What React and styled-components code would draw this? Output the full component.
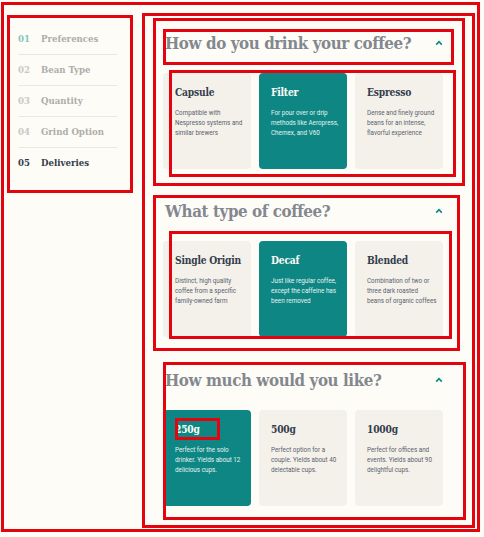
import React from "react";
import styled, { createGlobalStyle, css } from "styled-components";

const RED = "#e3040f";

const GlobalStyle = createGlobalStyle`
  html, body {
    margin: 0;
    padding: 0;
    background: #fefcf7;
  }
  * { box-sizing: border-box; }
`;

const steps = [
  { num: "01", label: "Preferences", state: "done" },
  { num: "02", label: "Bean Type" },
  { num: "03", label: "Quantity" },
  { num: "04", label: "Grind Option" },
  { num: "05", label: "Deliveries", state: "current" },
];

const sections = [
  {
    title: "How do you drink your coffee?",
    box: { ml: 0, w: 312, pl: 10, pt: 11, pb: 17 },
    titleMarked: true,
    rowFrame: "-3px -13px -8px 6px",
    cards: [
      { name: "Capsule", lines: ["Compatible with", "Nespresso systems and", "similar brewers"] },
      { name: "Filter", lines: ["For pour over or drip", "methods like Aeropress,", "Chemex, and V60"], active: true },
      { name: "Espresso", lines: ["Dense and finely ground", "beans for an intense,", "flavorful experience"] },
    ],
  },
  {
    title: "What type of coffee?",
    box: { ml: 0, w: 307, pl: 10, pt: 2, pb: 14 },
    rowFrame: "-10px -9px -2px 6px",
    cards: [
      { name: "Single Origin", lines: ["Distinct, high quality", "coffee from a specific", "family-owned farm"] },
      { name: "Decaf", lines: ["Just like regular coffee,", "except the caffeine has", "been removed"], active: true },
      { name: "Blended", lines: ["Combination of two or", "three dark roasted", "beans of organic coffees"] },
    ],
  },
  {
    title: "How much would you like?",
    box: { ml: 10, w: 303, pl: 0, pt: 4, pb: 14 },
    cards: [
      { name: "250g", lines: ["Perfect for the solo", "drinker. Yields about 12", "delicious cups."], active: true, marked: true },
      { name: "500g", lines: ["Perfect option for a", "couple. Yields about 40", "delectable cups."] },
      { name: "1000g", lines: ["Perfect for offices and", "events. Yields about 90", "delightful cups."] },
    ],
  },
];

export default function App() {
  return (
    <Page>
      <GlobalStyle />
      <Sidebar>
        {steps.map((s, i) => (
          <Step key={s.num} $last={i === steps.length - 1}>
            <StepNum $state={s.state}>{s.num}</StepNum>
            <StepLabel $state={s.state}>{s.label}</StepLabel>
          </Step>
        ))}
      </Sidebar>
      <Main>
        {sections.map((sec) => (
          <Section key={sec.title} $box={sec.box}>
            <TitleRow $marked={sec.titleMarked}>
              <Heading>{sec.title}</Heading>
              <Chevron width="8" height="6" viewBox="0 0 8 6">
                <polyline points="1.2,4.6 4,1.6 6.8,4.6" fill="none" stroke="#0e8784" strokeWidth="1.6" />
              </Chevron>
            </TitleRow>
            <Cards $frame={sec.rowFrame}>
              {sec.cards.map((c) => (
                <Card key={c.name} $active={c.active}>
                  <CardTitle $active={c.active} $marked={c.marked}>{c.name}</CardTitle>
                  <CardText $active={c.active}>
                    {c.lines.map((l, i) => (
                      <span key={i}>{l}</span>
                    ))}
                  </CardText>
                </Card>
              ))}
            </Cards>
          </Section>
        ))}
      </Main>
    </Page>
  );
}

const frame = (inset) => css`
  position: relative;
  &::after {
    content: "";
    position: absolute;
    inset: ${inset};
    border: 3px solid ${RED};
    pointer-events: none;
  }
`;

const Page = styled.div`
  width: 484px;
  height: 537px;
  display: flex;
  align-items: flex-start;
  background: #fefcf7;
  ${frame("2px 4px 5px 1px")}
`;

const Sidebar = styled.nav`
  margin: 15px 0 0 7px;
  width: 126px;
  height: 178px;
  padding: 9px 16px 0 11px;
  display: flex;
  flex-direction: column;
  outline: 3px solid ${RED};
  outline-offset: -3px;
`;

const Step = styled.div`
  height: 31px;
  padding-bottom: 1px;
  display: flex;
  align-items: center;
  gap: 10px;
  border-bottom: 1px solid ${(p) => (p.$last ? "transparent" : "#ebe8e1")};
  font-family: "DejaVu Serif", "Liberation Serif", serif;
  font-weight: 700;
  font-size: 8.6px;
`;

const StepNum = styled.span`
  width: 13px;
  color: ${(p) => (p.$state === "done" ? "#86c4c1" : p.$state === "current" ? "#333d4b" : "#c9c8c5")};
`;

const StepLabel = styled.span`
  color: ${(p) => (p.$state === "current" ? "#333d4b" : "#adadab")};
`;

const Main = styled.main`
  margin: 13px 0 0 9px;
  width: 333px;
  height: 515px;
  padding: 5px 0 0 11px;
  display: flex;
  flex-direction: column;
  gap: 9px;
  outline: 3px solid ${RED};
  outline-offset: -3px;
  & > *:last-child { margin-top: 2px; }
`;

const Section = styled.section`
  margin-left: ${(p) => p.$box.ml}px;
  width: ${(p) => p.$box.w}px;
  padding: ${(p) => `${p.$box.pt}px 0 ${p.$box.pb}px ${p.$box.pl}px`};
  display: flex;
  flex-direction: column;
  gap: 8px;
  outline: 3px solid ${RED};
  outline-offset: -3px;
`;

const TitleRow = styled.div`
  width: 291px;
  height: 36px;
  padding: 0 11px 8px 2px;
  display: flex;
  align-items: center;
  justify-content: space-between;
  ${(p) =>
    p.$marked &&
    css`
      outline: 3px solid ${RED};
      outline-offset: -3px;
    `}
`;

const Heading = styled.h2`
  margin: 0;
  font-family: "DejaVu Serif Condensed", "DejaVu Serif", serif;
  font-stretch: condensed;
  font-weight: 700;
  font-size: 16.8px;
  letter-spacing: -0.4px;
  line-height: 20px;
  color: #83888f;
  white-space: nowrap;
`;

const Chevron = styled.svg`
  display: block;
  flex: none;
`;

const Cards = styled.div`
  width: 280px;
  display: grid;
  grid-template-columns: repeat(3, 88px);
  gap: 8px;
  ${(p) => p.$frame && frame(p.$frame)}
`;

const Card = styled.div`
  height: 96px;
  border-radius: 4px;
  padding: 12.5px 8px 0 12px;
  background: ${(p) => (p.$active ? "#0e8784" : "#f4f1eb")};
`;

const CardTitle = styled.h3`
  margin: 0;
  font-family: "DejaVu Serif Condensed", "DejaVu Serif", serif;
  font-stretch: condensed;
  font-weight: 700;
  font-size: 10.2px;
  line-height: 13px;
  letter-spacing: -0.2px;
  color: ${(p) => (p.$active ? "#fefcf7" : "#333d4b")};
  white-space: nowrap;
  ${(p) =>
    p.$marked &&
    css`
      ${frame("-5px auto -4px 0")}
      &::after { width: 39px; }
    `}
`;

const CardText = styled.p`
  margin: 9px 0 0;
  display: flex;
  flex-direction: column;
  font-family: "Roboto", "Liberation Sans", sans-serif;
  font-size: 6.3px;
  line-height: 10px;
  color: ${(p) => (p.$active ? "#e6f2f1" : "#5a616b")};
  white-space: nowrap;
`;
